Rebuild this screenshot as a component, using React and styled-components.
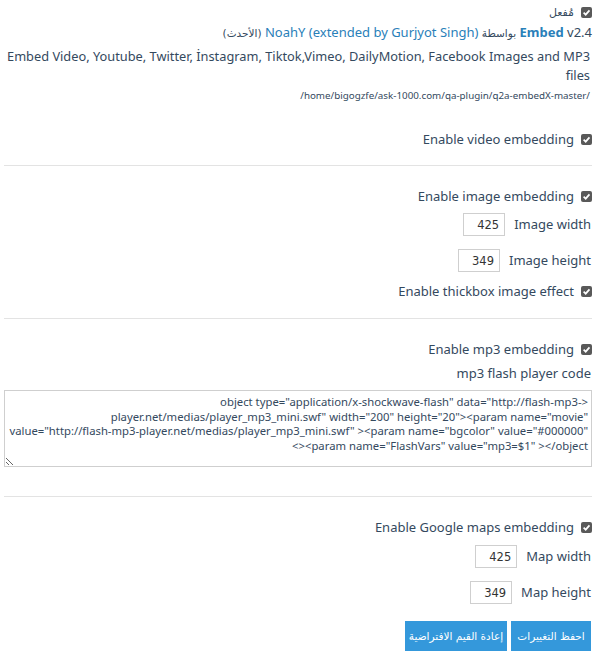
import React from 'react';
import styled, { createGlobalStyle } from 'styled-components';

const Global = createGlobalStyle`
  html, body { margin: 0; padding: 0; background: #fff; }
  body {
    font-family: "Noto Sans", "DejaVu Sans", sans-serif;
    color: #34495e;
    font-size: 13px;
  }
`;

const Page = styled.div`
  direction: rtl;
  width: 600px;
  box-sizing: border-box;
  padding: 1px 8px 0 4px;
`;

const Row = styled.div`
  display: flex;
  align-items: center;
  gap: ${p => (p.$gap ?? 7)}px;
  height: ${p => p.$h || 24}px;
  margin-top: ${p => p.$mt || 0}px;
  padding-right: ${p => p.$pr || 0}px;
`;

const CheckBox = styled.span`
  flex: none;
  width: 11px;
  height: 11px;
  border-radius: 2px;
  background: #595959;
  display: inline-flex;
  align-items: center;
  justify-content: center;
`;

const Label = styled.span`
  white-space: nowrap;
  line-height: 1;
`;

const ArabicLabel = styled.span`
  font-family: "DejaVu Sans", sans-serif;
  font-size: 11px;
`;

const Title = styled.div`
  line-height: 18px;
  white-space: nowrap;
`;

const Link = styled.a`
  color: #2980b9;
  text-decoration: none;
  font-weight: ${p => (p.$bold ? 700 : 400)};
`;

const Arabic = styled.span`
  font-family: "DejaVu Sans", sans-serif;
  font-size: 10.5px;
`;

const Desc = styled.div`
  margin-top: 5px;
  line-height: 19px;
  font-size: 12.8px;
  padding-right: 2px;
`;

const Path = styled.div`
  margin-top: 3px;
  line-height: 16px;
  font-size: 9.8px;
  padding-right: 2px;
  unicode-bidi: isolate;
`;

const Sep = styled.div`
  margin-top: ${p => p.$mt}px;
  border-top: 1px solid #e3e3e3;
`;

const NumInput = styled.input`
  width: 42px;
  height: 23px;
  box-sizing: border-box;
  border: 1px solid #cfcfcf;
  border-radius: 0;
  padding: 0 5px;
  font-family: "DejaVu Sans", sans-serif;
  font-size: 11.5px;
  color: #333;
  text-align: right;
  direction: ltr;
  background: #fff;
  outline: none;
`;

const Code = styled.textarea`
  display: block;
  margin-top: 5px;
  width: 100%;
  height: 77px;
  box-sizing: border-box;
  border: 1px solid #cfcfcf;
  padding: 4px 3px;
  font-family: "Noto Sans", sans-serif;
  font-size: 11.3px;
  line-height: 14.5px;
  color: #34495e;
  direction: rtl;
  unicode-bidi: plaintext;
  text-align: right;
  white-space: pre;
  overflow: hidden;
  resize: vertical;
  outline: none;
`;

const Buttons = styled.div`
  display: flex;
  gap: 4px;
  margin-top: 16px;
  padding-right: 1px;
`;

const Button = styled.button`
  height: 30px;
  width: ${p => p.$w}px;
  border: none;
  background: #3498db;
  color: #fff;
  font-family: "DejaVu Sans", sans-serif;
  font-size: 10.5px;
  padding: 0;
  cursor: pointer;
`;

const Check = () => (
  <CheckBox>
    <svg width="9" height="9" viewBox="0 0 10 10">
      <path d="M1.8 5.2 L4.1 7.4 L8.3 2.6" stroke="#fff" strokeWidth="1.9" fill="none" />
    </svg>
  </CheckBox>
);

const CheckRow = ({ children, mt }) => (
  <Row $mt={mt} $h={24}>
    <Check />
    <Label>{children}</Label>
  </Row>
);

const NumRow = ({ label, value, mt }) => (
  <Row $mt={mt} $h={25} $gap={9} $pr={1}>
    <Label>{label}</Label>
    <NumInput defaultValue={value} />
  </Row>
);

const codeText =
  'object type="application/x-shockwave-flash" data="http://flash-mp3->\n' +
  'player.net/medias/player_mp3_mini.swf" width="200" height="20"><param name="movie"\n' +
  'value="http://flash-mp3-player.net/medias/player_mp3_mini.swf" ><param name="bgcolor" value="#000000"\n' +
  '<><param name="FlashVars" value="mp3=$1" ></object';

export default function App() {
  return (
    <>
      <Global />
      <Page>
        <Row $h={22}>
          <Check />
          <ArabicLabel>مُفعل</ArabicLabel>
        </Row>
        <Title>
          <Link href="#" $bold>Embed</Link> v2.4 <Arabic>بواسطة</Arabic>{' '}
          <Link href="#">NoahY (extended by Gurjyot Singh)</Link> <Arabic>(الأحدث)</Arabic>
        </Title>
        <Desc>
          Embed Video, Youtube, Twitter, İnstagram, Tiktok,Vimeo, DailyMotion, Facebook Images and MP3
          <br />
          files
        </Desc>
        <Path>/home/bigogzfe/ask-1000.com/qa-plugin/q2a-embedX-master/</Path>

        <CheckRow mt={23}>Enable video embedding</CheckRow>
        <Sep $mt={14} />

        <CheckRow mt={18}>Enable image embedding</CheckRow>
        <NumRow mt={4} label="Image width" value="425" />
        <NumRow mt={11} label="Image height" value="349" />
        <CheckRow mt={6}>Enable thickbox image effect</CheckRow>
        <Sep $mt={15} />

        <CheckRow mt={18}>Enable mp3 embedding</CheckRow>
        <Row $h={24} $pr={1}>
          <Label>mp3 flash player code</Label>
        </Row>
        <Code defaultValue={codeText} spellCheck={false} />
        <Sep $mt={29} />

        <CheckRow mt={18}>Enable Google maps embedding</CheckRow>
        <NumRow mt={5} label="Map width" value="425" />
        <NumRow mt={11} label="Map height" value="349" />

        <Buttons>
          <Button $w={80}>احفظ التغييرات</Button>
          <Button $w={102}>إعادة القيم الافتراضية</Button>
        </Buttons>
      </Page>
    </>
  );
}
